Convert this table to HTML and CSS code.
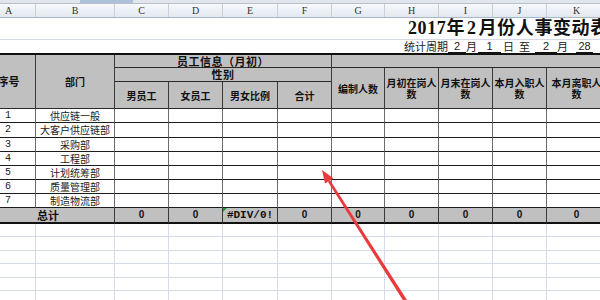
FILE: index.html
```html
<!DOCTYPE html>
<html lang="zh-CN">
<head>
<meta charset="utf-8">
<title>2017年2月份人事变动表</title>
<link rel="stylesheet" href="styles.css">
</head>
<body>
<div class="topband"><span class="topband-sel"></span></div>
<div class="sheet">
  <div class="grid colheads">
    <div>A</div><div>B</div><div>C</div><div>D</div><div>E</div><div>F</div><div>G</div><div>H</div><div>I</div><div>J</div><div>K</div>
  </div>
  <div class="title-row">2017年<span class="title-num">2</span>月份人事变动表</div>
  <div class="period-row">
    <span class="pt">统计周期</span><span class="u u1">2</span><span class="pt">月</span><span class="u u2">1</span><span class="pt m2">日</span><span class="pt m5">至</span><span class="u u3">2</span><span class="pt">月</span><span class="u u4">28</span>
  </div>
  <div class="grid table">
    <div class="h h-idx">序号</div>
    <div class="h h-rs3">部门</div>
    <div class="h h-big span4">员工信息（月初）</div>
    <div class="h span5"></div>
    <div class="h h-big span4">性别</div>
    <div class="h rs2">编制人数</div>
    <div class="h rs2">月初在岗人数</div>
    <div class="h rs2">月末在岗人数</div>
    <div class="h rs2">本月入职人数</div>
    <div class="h rs2">本月离职人数</div>
    <div class="h">男员工</div>
    <div class="h">女员工</div>
    <div class="h">男女比例</div>
    <div class="h">合计</div>

    <div class="d num">1</div><div class="d dept">供应链一般</div><div class="d"></div><div class="d"></div><div class="d"></div><div class="d"></div><div class="d"></div><div class="d"></div><div class="d"></div><div class="d"></div><div class="d"></div>
    <div class="d num">2</div><div class="d dept">大客户供应链部</div><div class="d"></div><div class="d"></div><div class="d"></div><div class="d"></div><div class="d"></div><div class="d"></div><div class="d"></div><div class="d"></div><div class="d"></div>
    <div class="d num">3</div><div class="d dept">采购部</div><div class="d"></div><div class="d"></div><div class="d"></div><div class="d"></div><div class="d"></div><div class="d"></div><div class="d"></div><div class="d"></div><div class="d"></div>
    <div class="d num">4</div><div class="d dept">工程部</div><div class="d"></div><div class="d"></div><div class="d"></div><div class="d"></div><div class="d"></div><div class="d"></div><div class="d"></div><div class="d"></div><div class="d"></div>
    <div class="d num">5</div><div class="d dept">计划统筹部</div><div class="d"></div><div class="d"></div><div class="d"></div><div class="d"></div><div class="d"></div><div class="d"></div><div class="d"></div><div class="d"></div><div class="d"></div>
    <div class="d num">6</div><div class="d dept">质量管理部</div><div class="d"></div><div class="d"></div><div class="d"></div><div class="d"></div><div class="d"></div><div class="d"></div><div class="d"></div><div class="d"></div><div class="d"></div>
    <div class="d num">7</div><div class="d dept">制造物流部</div><div class="d"></div><div class="d"></div><div class="d"></div><div class="d"></div><div class="d"></div><div class="d"></div><div class="d"></div><div class="d"></div><div class="d"></div>

    <div class="t t-label span2">总计</div>
    <div class="t">0</div><div class="t">0</div><div class="t t-err">#DIV/0!</div><div class="t">0</div><div class="t">0</div><div class="t">0</div><div class="t">0</div><div class="t">0</div><div class="t">0</div>
  </div>
  <div class="grid blank">
    <div></div><div></div><div></div><div></div><div></div><div></div><div></div><div></div><div></div><div></div><div></div>
    <div></div><div></div><div></div><div></div><div></div><div></div><div></div><div></div><div></div><div></div><div></div>
    <div></div><div></div><div></div><div></div><div></div><div></div><div></div><div></div><div></div><div></div><div></div>
    <div></div><div></div><div></div><div></div><div></div><div></div><div></div><div></div><div></div><div></div><div></div>
    <div></div><div></div><div></div><div></div><div></div><div></div><div></div><div></div><div></div><div></div><div></div>
    <div></div><div></div><div></div><div></div><div></div><div></div><div></div><div></div><div></div><div></div><div></div>
  </div>
</div>
<svg class="arrow" width="600" height="300" viewBox="0 0 600 300" aria-hidden="true">
  <polygon points="327.9,181.7 330.1,180.3 407,300 402.8,300" fill="#ea3a3c"/>
  <polygon points="322,170 333.4,178.2 325,183.6" fill="#ea3a3c"/>
</svg>
</body>
</html>
```

FILE: styles.css
```css
* { box-sizing: border-box; }

body {
  margin: 0;
  width: 600px;
  height: 300px;
  overflow: hidden;
  position: relative;
  background: #ffffff;
  font-family: "Noto Sans CJK SC", "Liberation Sans", sans-serif;
  color: #1a1a1a;
}

.topband {
  height: 4px;
  display: flex;
  background: #e1e6ec;
  border-bottom: 1px solid #b6c1cd;
}
.topband-sel {
  margin-left: 80px;
  width: 53px;
  background: #adc1db;
}

.sheet {
  margin-left: -18px;
  width: 625px;
}

.grid {
  display: grid;
  grid-template-columns: 54px 79px 54px 54px 55px 54px 53px 54px 54px 54px 60px;
}

/* column letters */
.colheads {
  height: 14px;
  background: linear-gradient(#f7f9fb, #e2e8ef);
  border-bottom: 1px solid #a7b6c8;
}
.colheads div {
  border-right: 1px solid #c6d0dc;
  text-align: center;
  font: 10px/13px "Liberation Serif", serif;
  color: #333;
}

.title-row {
  height: 22px;
  border-bottom: 1px solid #d3dae5;
  padding-left: 426px;
  font-family: "Liberation Serif", "Noto Sans CJK SC", serif;
  font-weight: bold;
  font-size: 18px;
  line-height: 21px;
  letter-spacing: 0.6px;
  white-space: nowrap;
  color: #111;
}
.title-num { margin: 0 2px; }

.period-row {
  height: 13px;
  padding-left: 422px;
  display: flex;
  font-size: 11px;
  line-height: 12px;
  white-space: nowrap;
  color: #222;
}
.pt { display: inline-block; }
.m2 { margin-left: 2px; }
.m5 { margin-left: 5px; }
.u {
  display: inline-block;
  height: 13px;
  border-bottom: 1px solid #111;
  text-align: center;
  font-family: "Liberation Sans", sans-serif;
}
.u1 { width: 18px; }
.u2 { width: 23px; margin-left: 1px; }
.u3 { width: 22px; margin-left: 5px; }
.u4 { width: 17px; margin-left: 8px; }

/* main table */
.table {
  border-top: 2px solid #111;
  grid-template-rows: 13px 14px 27px 14px 15px 14px 14px 14px 14px 14px 16px;
}
.h {
  background: #c0c0c0;
  border-right: 1px solid #3a3a3a;
  border-bottom: 1px solid #2a2a2a;
  display: flex;
  align-items: center;
  justify-content: center;
  text-align: center;
  font-size: 10px;
  line-height: 11px;
  font-weight: bold;
  color: #111;
  padding: 0 1px;
}
.h-idx {
  grid-row: span 3;
  font-size: 11px;
}
.h-rs3 { grid-row: span 3; }
.h-big {
  font-size: 11px;
  line-height: 11px;
  letter-spacing: 0.5px;
}
.span4 { grid-column: span 4; }
.span5 { grid-column: span 5; }
.span2 { grid-column: span 2; }
.rs2 { grid-row: span 2; }

.d {
  border-right: 1px solid #6b6b6b;
  border-bottom: 1px solid #1c1c1c;
  font-size: 10px;
  line-height: 13px;
  color: #222;
}
.num {
  padding-left: 23px;
  font-family: "Liberation Mono", monospace;
}
.dept { text-align: center; }

.t {
  background: #c0c0c0;
  border-right: 1px solid #3a3a3a;
  border-bottom: 2px solid #111;
  text-align: center;
  font-family: "Liberation Sans", sans-serif;
  font-weight: bold;
  font-size: 10px;
  line-height: 14px;
  color: #111;
}
.t-label {
  font-family: "Noto Sans CJK SC", sans-serif;
  font-size: 11px;
}
.t-err {
  position: relative;
  font-family: "Liberation Mono", monospace;
  font-size: 11px;
}
.t-err::before {
  content: "";
  position: absolute;
  left: 0;
  top: 0;
  border-top: 4px solid #1d9a3c;
  border-right: 4px solid transparent;
}

/* empty grid below */
.blank {
  grid-template-rows: 13px 14px 13px 14px 13px 14px;
}
.blank div {
  border-right: 1px solid #d6dce6;
  border-bottom: 1px solid #d6dce6;
}

.arrow {
  position: absolute;
  left: 0;
  top: 0;
  pointer-events: none;
}
```
